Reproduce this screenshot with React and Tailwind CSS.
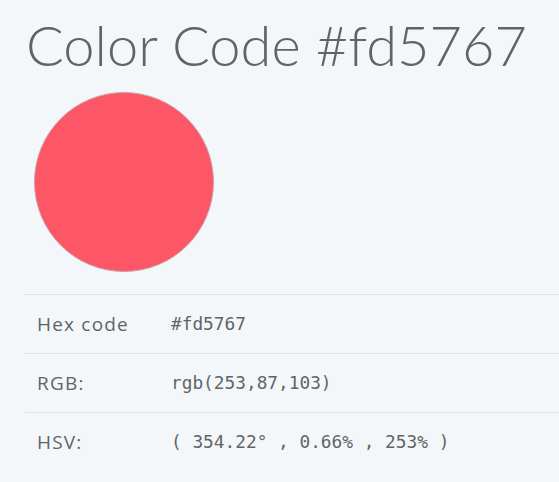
import React from "react";

const rows = [
  { label: "Hex code", value: "#fd5767" },
  { label: "RGB:", value: "rgb(253,87,103)" },
  { label: "HSV:", value: "( 354.22° , 0.66% , 253% )" },
];

function App() {
  return (
    <div className="min-h-screen bg-[#f4f7fa] text-[#5f6567] pl-[25px] pt-[12px] overflow-hidden">
      {/* Heading */}
      <h1 className="font-['Lato',sans-serif] font-light text-[56px] leading-[66px] pl-[1px] whitespace-nowrap">
        Color Code #fd5767
      </h1>

      {/* Swatch */}
      <div className="mt-[14px] ml-[9px] w-[180px] h-[180px] rounded-full bg-[#fd5767] border border-[#c9a3a6]" />

      {/* Details table */}
      <div className="mt-[22px] w-[560px]">
        {rows.map((row, index) => (
          <div
            key={index}
            className="flex items-center h-[59px] border-t border-[#dfe3e6]"
          >
            <div className="w-[146px] pl-[12px] font-['Open_Sans',sans-serif] text-[19px] tracking-[1.2px]">
              {row.label}
            </div>
            <div className="font-['DejaVu_Sans_Mono',monospace] text-[17.8px] whitespace-pre">
              {row.value}
            </div>
          </div>
        ))}
      </div>
    </div>
  );
}

export default App;
